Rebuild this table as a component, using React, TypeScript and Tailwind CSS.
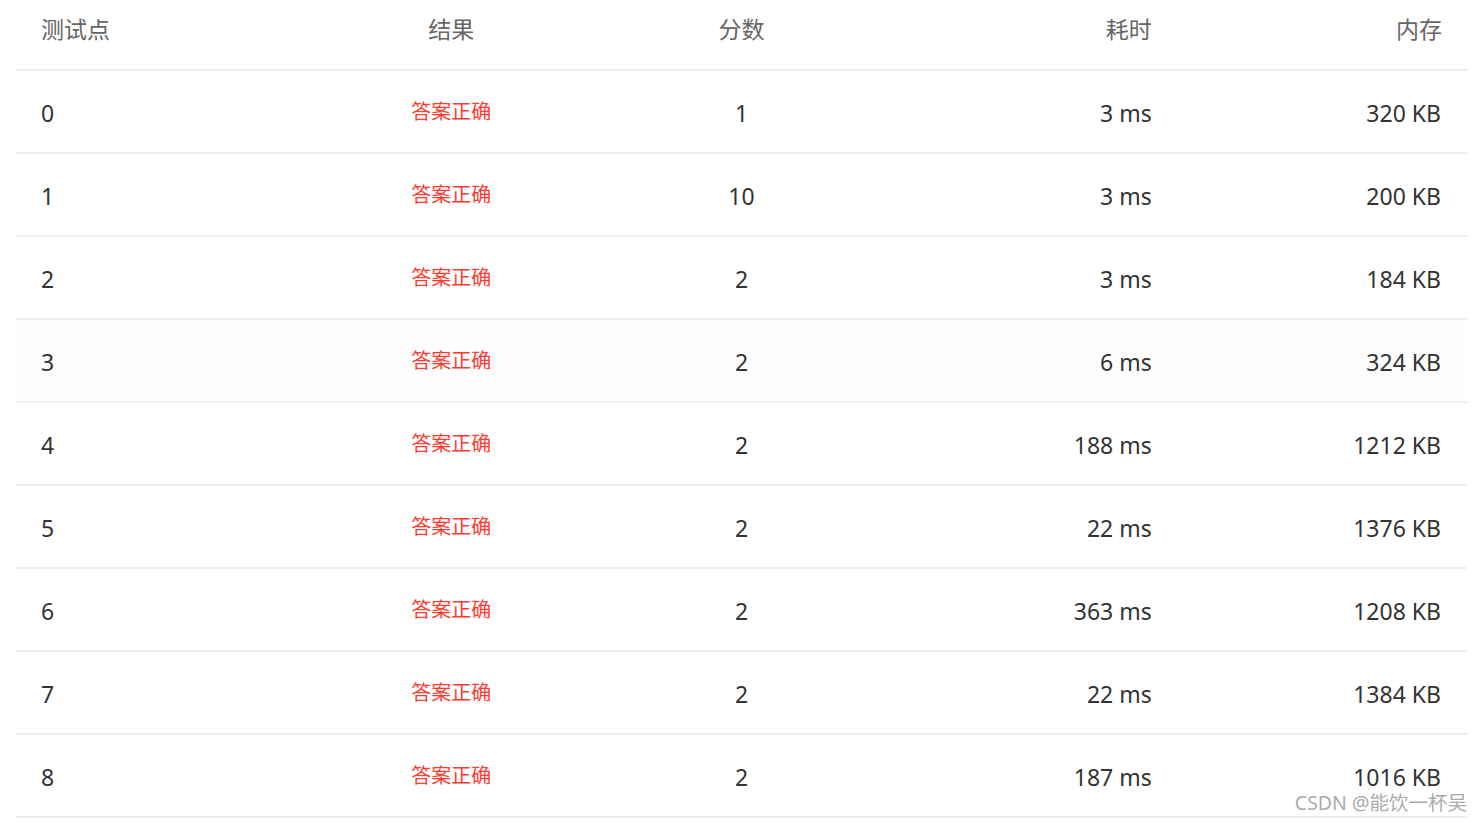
const rows = [
  { id: 0, score: 1, time: '3 ms', mem: '320 KB' },
  { id: 1, score: 10, time: '3 ms', mem: '200 KB' },
  { id: 2, score: 2, time: '3 ms', mem: '184 KB' },
  { id: 3, score: 2, time: '6 ms', mem: '324 KB' },
  { id: 4, score: 2, time: '188 ms', mem: '1212 KB' },
  { id: 5, score: 2, time: '22 ms', mem: '1376 KB' },
  { id: 6, score: 2, time: '363 ms', mem: '1208 KB' },
  { id: 7, score: 2, time: '22 ms', mem: '1384 KB' },
  { id: 8, score: 2, time: '187 ms', mem: '1016 KB' },
]

export default function App() {
  return (
    <div
      className="relative h-[823px] w-full overflow-hidden bg-white px-4"
      style={{ fontFamily: '"Noto Sans", "Noto Sans CJK SC", sans-serif' }}
    >
      <table className="w-full table-fixed border-collapse">
        <thead>
          <tr className="h-[70px] border-b-2 border-[#eeeeee] text-[23px] leading-none text-[#666666]">
            <th className="px-[25px] pb-[10px] text-left font-normal">测试点</th>
            <th className="px-[25px] pb-[10px] text-center font-normal">结果</th>
            <th className="px-[25px] pb-[10px] text-center font-normal">分数</th>
            <th className="px-[25px] pb-[10px] text-right font-normal">耗时</th>
            <th className="px-[25px] pb-[10px] text-right font-normal">内存</th>
          </tr>
        </thead>
        <tbody>
          {rows.map((r) => (
            <tr
              key={r.id}
              className={`h-[83px] border-b-2 border-[#eeeeee] text-[23px] text-[#333333] ${
                r.id === 3 ? 'bg-[#fdfdfd]' : ''
              }`}
            >
              <td className="px-[25px] pt-[4px] text-left">{r.id}</td>
              <td className="px-[25px] pt-[1px] text-center text-[20px] text-[#ff3b30]">
                答案正确
              </td>
              <td className="px-[25px] pt-[4px] text-center">{r.score}</td>
              <td className="px-[25px] pt-[4px] text-right">{r.time}</td>
              <td className="px-[25px] pt-[4px] pr-[26px] text-right">{r.mem}</td>
            </tr>
          ))}
        </tbody>
      </table>

      {/* watermark */}
      <div className="absolute bottom-[6px] right-[16px] text-[19.5px] text-[#aaaaaa]">
        CSDN @能饮一杯吴
      </div>
    </div>
  )
}
